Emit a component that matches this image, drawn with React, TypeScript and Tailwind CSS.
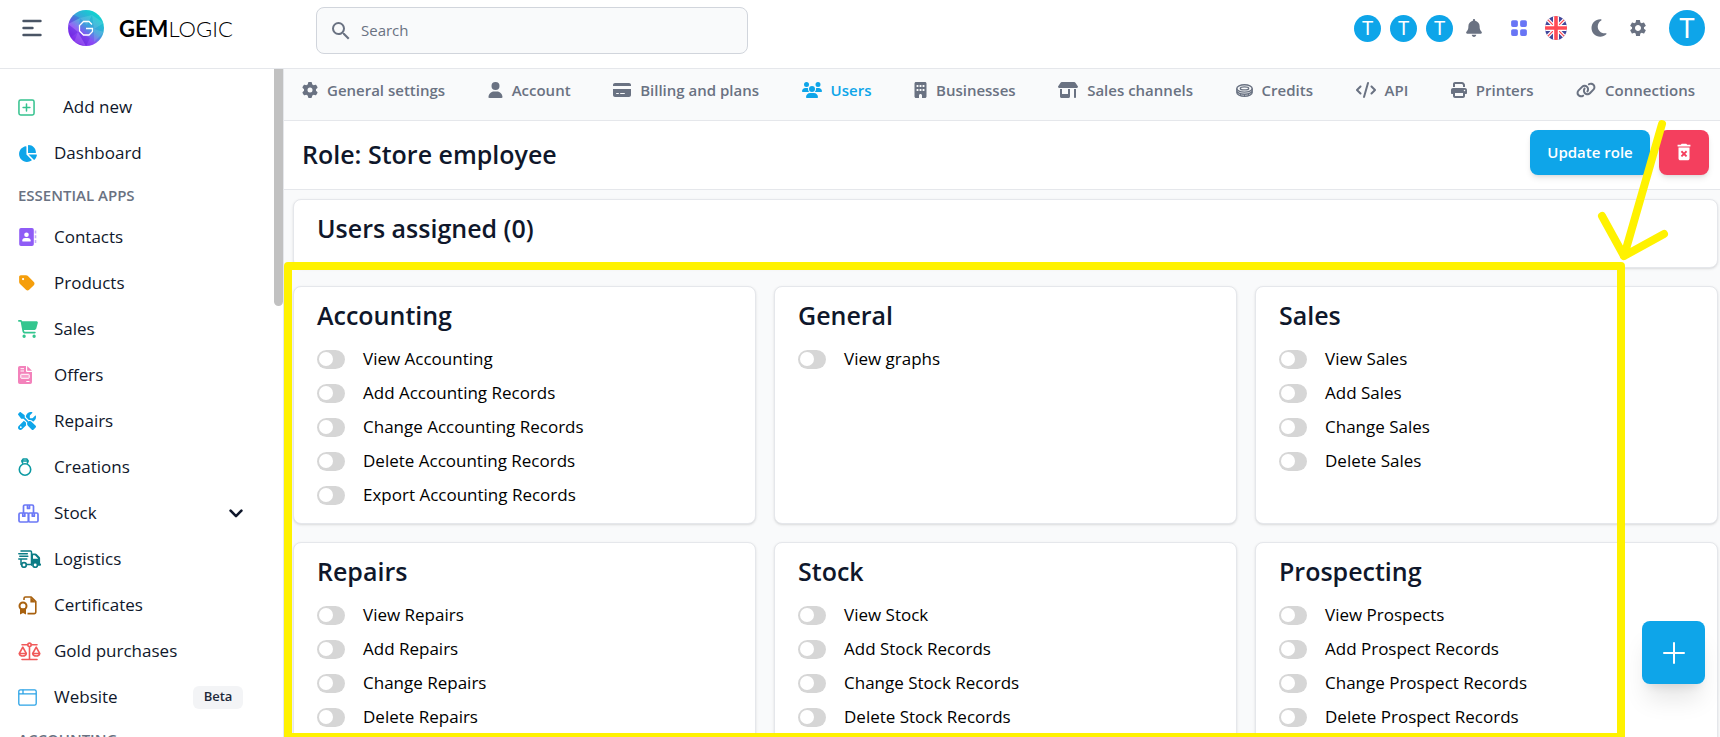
import React, { useState } from 'react';
import {
  FaGear, FaUser, FaCreditCard, FaUsers, FaBuilding, FaShop, FaCode, FaPrint, FaLink,
  FaBell, FaMoon, FaChartPie, FaTag, FaCartShopping, FaScrewdriverWrench,
} from 'react-icons/fa6';
import { BsGridFill } from 'react-icons/bs';
import { MdDeleteForever, MdSearch, MdSettings } from 'react-icons/md';

type IconProps = { className?: string };

const AddBoxIcon = ({ className }: IconProps) => (
  <svg viewBox="0 0 18 18" className={className} fill="none" stroke="currentColor" strokeWidth="1.6" strokeLinecap="round">
    <rect x="1" y="1" width="16" height="16" rx="1.8" />
    <path d="M9 5.400v7.200M5.400 9h7.200" />
  </svg>
);

const ContactsIcon = ({ className }: IconProps) => (
  <svg viewBox="0 0 18 18" className={className} fill="currentColor">
    <path fillRule="evenodd" d="M2.500 0h11A1.800 1.800 0 0 1 15.300 1.800v14.400A1.800 1.800 0 0 1 13.500 18h-11A1.800 1.800 0 0 1 .7 16.200V1.800A1.800 1.800 0 0 1 2.500 0zM8 4.500a2.300 2.300 0 1 0 0 4.600 2.300 2.300 0 0 0 0-4.600zM4.200 13.500h7.600c.3 0 .5-.2.5-.5 0-1.600-1.300-2.900-2.900-2.900H6.600A2.900 2.900 0 0 0 3.700 13c0 .3.2.5.5.500z" />
    <path opacity=".5" d="M16.200 2.500h1.600v3h-1.600zM16.200 7.200h1.600v3h-1.600zM16.200 12h1.600v3h-1.600z" />
  </svg>
);

const OffersIcon = ({ className }: IconProps) => (
  <svg viewBox="0 0 14 18" className={className}>
    <path fill="currentColor" d="M1.800 0H8v4.900a1 1 0 0 0 1 1H14v10.300a1.800 1.800 0 0 1-1.800 1.800H1.800A1.800 1.800 0 0 1 0 16.200V1.800A1.800 1.800 0 0 1 1.800 0z" />
    <path fill="currentColor" d="M9.200 0 14 4.700H9.200z" />
    <path stroke="#fff" strokeWidth="1" fill="none" d="M2.500 2.700h3.500M2.500 5h3.500M8.300 15.500h3.200" />
    <rect x="2.800" y="8.300" width="8.400" height="4" rx=".5" fill="#fff" fillOpacity=".25" stroke="#fff" strokeWidth="1" />
  </svg>
);

const RingIcon = ({ className }: IconProps) => (
  <svg viewBox="0 0 14 18" className={className} fill="none" stroke="currentColor" strokeWidth="1.600" strokeLinejoin="round">
    <circle cx="7" cy="11.500" r="5.700" />
    <path d="M4.900 5.800 3.800 2.900 5.200 1h3.600l1.400 1.900-1.100 2.900M4 3h6" />
  </svg>
);

const BoxesIcon = ({ className }: IconProps) => (
  <svg viewBox="0 0 21 19" className={className} fill="none" stroke="currentColor" strokeWidth="1.700" strokeLinejoin="round">
    <path d="M5.500 9V2.300A1.300 1.300 0 0 1 6.800 1h7.400a1.300 1.300 0 0 1 1.300 1.300V9" />
    <rect x="1" y="9" width="9.500" height="9" rx="1.300" />
    <rect x="10.500" y="9" width="9.500" height="9" rx="1.300" />
    <path d="M9.500 1v3.400h2V1M4.800 9v3.200h2V9M14.300 9v3.200h2V9" />
  </svg>
);

const TruckIcon = ({ className }: IconProps) => (
  <svg viewBox="0 0 23 18" className={className} fill="none" stroke="currentColor" strokeWidth="1.500" strokeLinecap="round">
    <path d="M3 1h9.500a1 1 0 0 1 1 1v12.500H9M0.800 3.700h8.500M1.800 6.300h8M0.800 8.900h8M3 9v5.500" />
    <path fill="currentColor" stroke="none" fillRule="evenodd" d="M13 3.500h4.300c.5 0 1 .2 1.300.5l3 3c.3.400.5.800.5 1.300v5.200a1.100 1.100 0 0 1 0 2.200h-2a3 3 0 0 0-6 0H13zM15 5.300v3.500h5v-.4l-3.100-3.100z" />
    <circle cx="6" cy="15" r="2.300" fill="#fff" strokeWidth="1.700" />
    <circle cx="17.200" cy="15" r="2.300" fill="#fff" strokeWidth="1.700" />
  </svg>
);

const CertificateIcon = ({ className }: IconProps) => (
  <svg viewBox="0 0 19 19" className={className} fill="none" stroke="currentColor" strokeWidth="1.600">
    <path strokeLinejoin="round" d="M6 4V2.500A1.500 1.500 0 0 1 7.500 1h5.700l4.600 4.600V16a1.600 1.600 0 0 1-1.600 1.600H9.500" />
    <path fill="currentColor" stroke="none" d="M12.400 1v5.400h5.400z" />
    <circle cx="5" cy="10" r="3.500" strokeWidth="2" />
    <path fill="currentColor" stroke="none" d="M2 12.500h6v6.100l-3-1.500-3 1.500z" />
  </svg>
);

const ScaleIcon = ({ className }: IconProps) => (
  <svg viewBox="0 0 23 19" className={className} fill="none" stroke="currentColor" strokeWidth="1.600" strokeLinecap="round" strokeLinejoin="round">
    <circle cx="11.500" cy="2.800" r="1.700" />
    <path d="M4 2.800h5.500M13.500 2.800H19M11.500 4.800v12.500M4 17.500h15" />
    <path d="M4.800 5.200 1.300 11.500c.3 1.600 1.700 2.500 3.500 2.500s3.200-.9 3.500-2.500zM18.200 5.200l-3.500 6.300c.3 1.600 1.700 2.500 3.500 2.500s3.200-.9 3.500-2.500z" />
    <path d="M1.600 11.500H8M15 11.500h6.400" />
  </svg>
);

const WindowIcon = ({ className }: IconProps) => (
  <svg viewBox="0 0 19 17" className={className} fill="none" stroke="currentColor" strokeWidth="1.300">
    <rect x=".8" y=".8" width="17.400" height="15.400" rx="1.600" />
    <path d="M.8 4.800h17.400M5 .8v4" />
  </svg>
);

const CoinsIcon = ({ className }: IconProps) => (
  <svg viewBox="0 0 17 13" className={className} fill="none" stroke="currentColor" strokeWidth="1.400">
    <ellipse cx="8.500" cy="4.400" rx="7.700" ry="3.700" />
    <ellipse cx="8.500" cy="4.400" rx="4.200" ry="1.500" />
    <path d="M.8 4.500v4c0 2 3.400 3.700 7.700 3.700s7.700-1.700 7.700-3.700v-4M.8 6.500c0 2 3.400 3.700 7.700 3.700s7.700-1.700 7.700-3.700" />
    <path strokeWidth="1" d="M4.500 9v2.500M8.500 10v2M12.500 9v2.500" />
  </svg>
);

const ChevronIcon = ({ className }: IconProps) => (
  <svg viewBox="0 0 14 9" className={className} fill="none" stroke="currentColor" strokeWidth="2.600" strokeLinecap="round" strokeLinejoin="round">
    <path d="m1.600 1.700 5.400 5.400 5.400-5.400" />
  </svg>
);

const MenuIcon = ({ className }: IconProps) => (
  <svg viewBox="0 0 20 18" className={className} stroke="currentColor" strokeWidth="2.400" strokeLinecap="round">
    <path d="M1.500 2h17M1.500 9h9M1.500 16h17" />
  </svg>
);

const Flag = ({ className }: IconProps) => (
  <svg viewBox="0 0 22 24" className={className}>
    <defs><clipPath id="flag-clip"><ellipse cx="11" cy="12" rx="11" ry="12" /></clipPath></defs>
    <g clipPath="url(#flag-clip)">
      <path fill="#41479b" d="M0 0h22v24H0z" />
      <path stroke="#fff" strokeWidth="3.600" d="M0 1l22 22M22 1 0 23" />
      <path stroke="#ff4b55" strokeWidth="1.200" d="M0 1l22 22M22 1 0 23" />
      <path stroke="#fff" strokeWidth="6" d="M11 0v24M0 12h22" />
      <path stroke="#ff4b55" strokeWidth="3.600" d="M11 0v24M0 12h22" />
    </g>
  </svg>
);

const LogoMark = ({ className }: IconProps) => (
  <svg viewBox="0 0 36 36" className={className}>
    <defs>
      <linearGradient id="gem" x1=".15" y1=".95" x2=".8" y2=".1">
        <stop offset="0" stopColor="#7a1fe6" />
        <stop offset=".35" stopColor="#8a4df5" />
        <stop offset=".6" stopColor="#3f9fdc" />
        <stop offset="1" stopColor="#0fd3cf" />
      </linearGradient>
      <clipPath id="gem-clip"><circle cx="18" cy="18" r="18" /></clipPath>
    </defs>
    <g clipPath="url(#gem-clip)">
      <path fill="url(#gem)" d="M0 0h36v36H0z" />
      <path fill="#fff" fillOpacity=".12" d="M0 14 12 8l-2 14zM12 8l12-3-5 10zM24 5l12 8-10 6zM10 22l8 14-12-4zM26 19l10 3-10 10z" />
      <path fill="#4310c9" fillOpacity=".22" d="M0 14l10 8-8 6zM18 36l-8-14 12 6zM4 4l8 4L0 14z" />
    </g>
    <path fill="none" stroke="#fff" strokeWidth="1.300" d="M24 14.500 21 11.500h-5.500L11.500 15.500v5.500l4 4H21l3.500-3.500V18.500h-6.500" />
  </svg>
);

type NavItem = { label: string; icon: React.ReactNode; badge?: string; expandable?: boolean };

const navItems: NavItem[] = [
  { label: 'Contacts', icon: <ContactsIcon className="h-[18px] w-[19px] text-[#8f5cf6]" /> },
  { label: 'Products', icon: <FaTag className="size-[18px] text-[#f59e0b]" /> },
  { label: 'Sales', icon: <FaCartShopping className="size-5 text-[#34c68f]" /> },
  { label: 'Offers', icon: <OffersIcon className="h-[18px] w-3.5 text-[#f382bb]" /> },
  { label: 'Repairs', icon: <FaScrewdriverWrench className="size-[18px] text-[#0ea5e9]" /> },
  { label: 'Creations', icon: <RingIcon className="h-[18px] w-3.5 text-[#0d9aa3]" /> },
  { label: 'Stock', icon: <BoxesIcon className="h-[19px] w-[21px] text-[#6b78f6]" />, expandable: true },
  { label: 'Logistics', icon: <TruckIcon className="h-[18px] w-[23px] text-[#0c7c86]" /> },
  { label: 'Certificates', icon: <CertificateIcon className="size-[19px] text-[#a8610f]" /> },
  { label: 'Gold purchases', icon: <ScaleIcon className="h-[19px] w-[23px] text-[#f05a5a]" /> },
  { label: 'Website', icon: <WindowIcon className="h-[17px] w-[19px] text-[#2ba3e6]" />, badge: 'Beta' },
];

const tabs = [
  { label: 'General settings', icon: <FaGear className="size-4" /> },
  { label: 'Account', icon: <FaUser className="h-4 w-[15px]" /> },
  { label: 'Billing and plans', icon: <FaCreditCard className="size-[18px]" /> },
  { label: 'Users', icon: <FaUsers className="size-5" />, active: true },
  { label: 'Businesses', icon: <FaBuilding className="h-4 w-[13px]" /> },
  { label: 'Sales channels', icon: <FaShop className="h-[18px] w-5" /> },
  { label: 'Credits', icon: <CoinsIcon className="h-[13px] w-[17px]" /> },
  { label: 'API', icon: <FaCode className="size-5" /> },
  { label: 'Printers', icon: <FaPrint className="size-4" /> },
  { label: 'Connections', icon: <FaLink className="size-5" /> },
];

const groups = [
  { title: 'Accounting', permissions: ['View Accounting', 'Add Accounting Records', 'Change Accounting Records', 'Delete Accounting Records', 'Export Accounting Records'] },
  { title: 'General', permissions: ['View graphs'] },
  { title: 'Sales', permissions: ['View Sales', 'Add Sales', 'Change Sales', 'Delete Sales'] },
  { title: 'Repairs', permissions: ['View Repairs', 'Add Repairs', 'Change Repairs', 'Delete Repairs'] },
  { title: 'Stock', permissions: ['View Stock', 'Add Stock Records', 'Change Stock Records', 'Delete Stock Records'] },
  { title: 'Prospecting', permissions: ['View Prospects', 'Add Prospect Records', 'Change Prospect Records', 'Delete Prospect Records'] },
];

function Permission({ label }: { label: string }) {
  const [on, setOn] = useState(false);
  return (
    <label className="flex h-[34px] items-center gap-[18px] text-[17px] text-black">
      <input
        type="checkbox"
        checked={on}
        onChange={() => setOn(!on)}
        className="flex h-[19px] w-7 shrink-0 cursor-pointer appearance-none items-center rounded-full bg-[#d6d6d6] px-0.5 before:size-3.5 before:rounded-full before:bg-white checked:justify-end checked:bg-[#0ea5e9]"
      />
      {label}
    </label>
  );
}

function Header() {
  return (
    <header className="flex h-[69px] shrink-0 items-start border-b border-gray-200 bg-white">
      <div className="flex w-[316px] shrink-0 items-center pt-[10px] pl-[22px]">
        <button type="button" aria-label="Toggle menu" className="text-gray-600">
          <MenuIcon className="h-[18px] w-5" />
        </button>
        <a href="#home" className="ml-[26px] flex items-center gap-[15px] font-['Lato',sans-serif] text-[22px] text-black">
          <LogoMark className="size-9" />
          <span><span className="font-bold">GEM</span><span className="font-light">LOGIC</span></span>
        </a>
      </div>
      <label className="mt-[7px] flex h-[47px] w-[432px] items-center gap-2 rounded-lg border border-gray-300 bg-gray-50 pl-3">
        <MdSearch className="size-6 shrink-0 text-gray-500" />
        <input type="search" aria-label="Search" placeholder="Search" className="w-full bg-transparent text-[15px] outline-none placeholder:text-gray-500" />
      </label>
      <div className="mt-[10px] ml-auto flex h-9 items-center pr-[15px] text-gray-500">
        <div className="flex gap-[9px]">
          {['a', 'b', 'c'].map((k) => (
            <button key={k} type="button" className="flex size-[27px] items-center justify-center rounded-full bg-[#0ea5e9] font-['Lato',sans-serif] text-[19px] text-white">T</button>
          ))}
        </div>
        <button type="button" aria-label="Notifications" className="ml-3"><FaBell className="size-[18px]" /></button>
        <button type="button" aria-label="Apps" className="ml-[27px] text-[#6875f5]"><BsGridFill className="size-[18px]" /></button>
        <button type="button" aria-label="Language" className="ml-[17px]"><Flag className="h-6 w-[22px]" /></button>
        <button type="button" aria-label="Dark mode" className="ml-[22px]"><FaMoon className="size-5" /></button>
        <button type="button" aria-label="Settings" className="ml-[19px]"><MdSettings className="size-5" /></button>
        <button type="button" className="ml-[21px] flex size-9 items-center justify-center rounded-full bg-[#0ea5e9] font-['Lato',sans-serif] text-[26px] text-white">T</button>
      </div>
    </header>
  );
}

function Sidebar() {
  return (
    <aside className="flex w-[283px] shrink-0 overflow-hidden bg-white">
      <nav className="min-w-0 flex-1 pt-[15px] text-[17px] text-slate-900">
        <a href="#add" className="flex h-[46px] items-center pl-[18px]">
          <span className="w-[45px]"><AddBoxIcon className="size-[17px] text-[#34c28e]" /></span>Add new
        </a>
        <a href="#dashboard" className="flex h-[46px] items-center pl-[18px]">
          <span className="w-9"><FaChartPie className="size-[19px] text-[#0ea5e9]" /></span>Dashboard
        </a>
        <h2 className="flex h-[38px] items-center pl-[18px] text-[15px] font-semibold text-gray-500">ESSENTIAL APPS</h2>
        {navItems.map((item) => (
          <a key={item.label} href={'#' + item.label.toLowerCase()} className="flex h-[46px] items-center pr-[31px] pl-[18px]">
            <span className="w-9 shrink-0">{item.icon}</span>
            {item.label}
            {item.expandable && <ChevronIcon className="ml-auto h-[9px] w-3.5" />}
            {item.badge && <span className="ml-auto flex h-[23px] w-[50px] items-center justify-center rounded-md bg-gray-100 text-[13px] font-semibold text-gray-800">{item.badge}</span>}
          </a>
        ))}
        <h2 className="flex h-[38px] items-center pl-[18px] text-[15px] font-semibold text-gray-500">ACCOUNTING</h2>
      </nav>
      <div className="h-[237px] w-[9px] shrink-0 rounded-b-full bg-[#c1c1c1]" />
    </aside>
  );
}

function Annotation() {
  return (
    <svg className="pointer-events-none absolute top-0 left-0 h-[745px] w-[1720px]" viewBox="0 0 1720 745" fill="none" stroke="#fff200" strokeWidth="8" strokeLinecap="round" strokeLinejoin="round">
      <path d="M288 266H1621V737H288z" />
      <path d="M1662 124 1624 256M1602 216l22 40 40-22" />
    </svg>
  );
}

export default function App() {
  return (
    <div className="relative flex h-screen flex-col overflow-hidden bg-white font-['Open_Sans','Noto_Sans',sans-serif]">
      <Header />
      <div className="flex min-h-0 flex-1">
        <Sidebar />
        <main className="min-w-0 flex-1 overflow-hidden border-l border-gray-200 bg-gray-50">
          <nav className="flex h-[52px] justify-between border-b border-gray-200 pt-[9px] pr-[25px] pl-[18px]">
            {tabs.map((tab) => (
              <a key={tab.label} href={'#' + tab.label.toLowerCase().replace(/ /g, '-')} className={tab.active ? 'flex h-6 items-center gap-[9px] text-[15px] font-semibold whitespace-nowrap text-[#0ea5e9]' : 'flex h-6 items-center gap-[9px] text-[15px] font-semibold whitespace-nowrap text-gray-500'}>
                {tab.icon}
                {tab.label}
              </a>
            ))}
          </nav>
          <div className="flex h-[69px] items-center justify-between border-b border-gray-200 bg-white pr-[11px] pl-[18px]">
            <h1 className="text-[25px] font-semibold text-slate-900">Role: Store employee</h1>
            <div className="flex gap-[9px] pb-1.5">
              <button type="button" className="h-[45px] w-[120px] rounded-lg bg-[#0ea5e9] text-[15px] font-semibold text-white shadow-md">Update role</button>
              <button type="button" aria-label="Delete role" className="flex h-[45px] w-[50px] items-center justify-center rounded-lg bg-[#f43f5e] text-white shadow-md">
                <MdDeleteForever className="size-[22px]" />
              </button>
            </div>
          </div>
          <div className="flex flex-col gap-[18px] pt-[9px] pr-0.5 pl-[9px]">
            <section className="h-[69px] rounded-lg border border-gray-200 bg-white px-[23px] pt-2.5 shadow-sm">
              <h2 className="text-[25px] leading-9 font-semibold text-slate-900">Users assigned (0)</h2>
            </section>
            <div className="grid grid-cols-3 gap-[18px]">
              {groups.map((g) => (
                <section key={g.title} className="min-h-[238px] rounded-lg border border-gray-200 bg-white px-[23px] pt-2.5 shadow-sm">
                  <h2 className="mb-[9px] text-[25px] leading-9 font-semibold text-slate-900">{g.title}</h2>
                  {g.permissions.map((p) => <Permission key={p} label={p} />)}
                </section>
              ))}
            </div>
          </div>
        </main>
      </div>
      <button type="button" aria-label="Add" className="absolute right-[15px] bottom-[53px] flex size-[63px] items-center justify-center rounded-lg bg-[#0ea5e9] text-white shadow-xl">
        <svg viewBox="0 0 22 22" className="size-[22px]" stroke="currentColor" strokeWidth="2" strokeLinecap="round"><path d="M11 1v20M1 11h20" /></svg>
      </button>
      <Annotation />
    </div>
  );
}
